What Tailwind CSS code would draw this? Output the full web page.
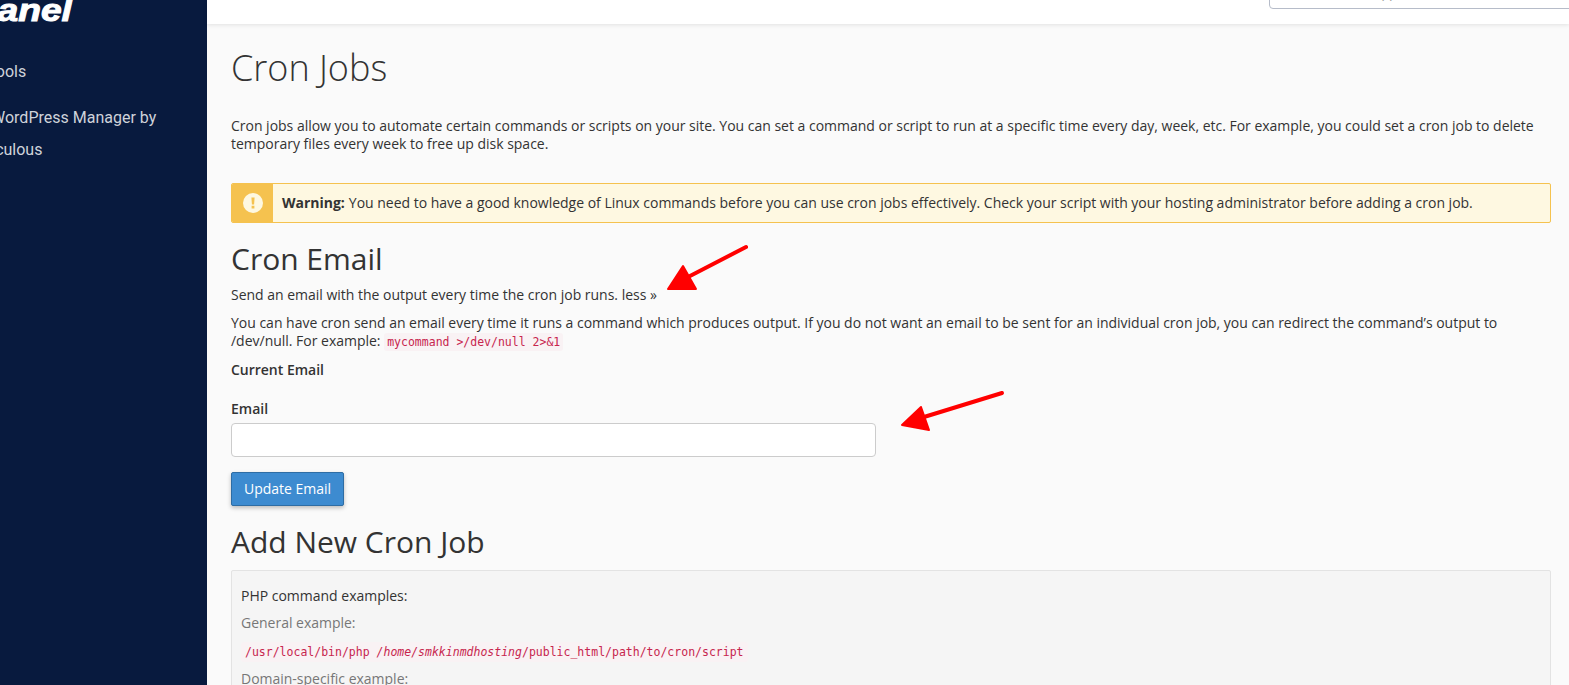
<!DOCTYPE html>
<html lang="en">
  <head>
    <meta charset="UTF-8" />
    <title>Cron Jobs</title>
    <script src="https://cdn.jsdelivr.net/npm/@tailwindcss/browser@4"></script>
  </head>
  <body class="h-[685px] overflow-hidden bg-[#fafafa] font-['Open_Sans',sans-serif] text-[14px] leading-[18px] tracking-[-0.012px] text-[#333]">
    <div class="flex h-[685px] overflow-hidden">
      <!-- Sidebar -->
      <aside class="relative w-[207px] shrink-0 overflow-hidden bg-[#081a3e] font-['Roboto',sans-serif] text-[16px] tracking-normal text-[#cfd3da]">
        <div class="mt-[-5px] ml-[-48px] h-[31px] origin-left scale-x-[1.2] font-['Liberation_Sans',sans-serif] text-[31px] leading-[31px] font-bold whitespace-nowrap text-white italic [-webkit-text-stroke:1px_white]">cPanel</div>
        <ul class="mt-[30px]">
          <li class="ml-[-13px] leading-[32px]">Tools</li>
          <li class="mt-[14px] ml-[-43px] leading-[32px]"><span class="inline-block w-[34px]"></span>WordPress Manager by<br />Softaculous</li>
        </ul>
      </aside>

      <div class="min-w-0 flex-1">
        <!-- Top bar -->
        <header class="relative flex h-[24px] justify-end bg-white shadow-[0_1px_4px_rgba(0,0,0,0.1)]">
          <div class="mt-[-21px] mr-[-10px] h-[30px] w-[310px] rounded-[4px] border border-[#b6bcc9] bg-white pt-[3px] pl-[24px] leading-[20px] text-[#999]">Search Tools (/)</div>
        </header>

        <!-- Page content -->
        <main class="pr-[18px] pl-[24px]">
          <h1 class="mt-[19px] text-[36px] leading-[50px] font-light text-[#333]">Cron Jobs</h1>
          <p class="mt-[24px]">
            Cron jobs allow you to automate certain commands or scripts on your site. You can set a command or script to run at a specific time every day, week, etc. For example, you could set a cron job to delete temporary files every week to free up disk space.
          </p>

          <div class="mt-[30px] flex h-[40px] items-stretch overflow-hidden rounded-[2px] border border-[#f5c24f] bg-[#fef8e1]">
            <div class="flex w-[41px] items-center justify-center bg-[#f5c24f]">
              <svg class="h-[20px] w-[20px]" viewBox="0 0 20 20" aria-hidden="true">
                <circle cx="10" cy="10" r="10" fill="#fef8e1" />
                <path d="M8.4 4.5h3.2l-.5 7h-2.2zM8.6 12.8h2.8v2.7H8.6z" fill="#f5c24f" />
              </svg>
            </div>
            <p class="flex items-center pl-[9px]"><strong class="mr-[4px] font-bold">Warning:</strong> You need to have a good knowledge of Linux commands before you can use cron jobs effectively. Check your script with your hosting administrator before adding a cron job.</p>
          </div>

          <h2 class="mt-[17px] text-[30px] leading-[38px] font-normal">Cron Email</h2>
          <p class="mt-[8px]">Send an email with the output every time the cron job runs. <span>less »</span></p>
          <p class="mt-[10px]">
            You can have cron send an email every time it runs a command which produces output. If you do not want an email to be sent for an individual cron job, you can redirect the command’s output to /dev/null. For example:
            <code class="rounded-[3px] bg-[#f9f2f4] px-[3px] py-[2px] font-['DejaVu_Sans_Mono',monospace] text-[11.5px] tracking-normal text-[#c7254e]">mycommand &gt;/dev/null 2&gt;&amp;1</code>
          </p>
          <p class="mt-[10px] font-semibold">Current Email</p>

          <label class="mt-[21px] block font-semibold" for="email">Email</label>
          <input id="email" type="text" class="mt-[5px] block h-[34px] w-[645px] rounded-[4px] border border-[#ccc] bg-white" />
          <button class="mt-[15px] block h-[34px] w-[113px] rounded-[2px] border border-[#2e6da4] bg-[#3d8bd0] text-white shadow-[0_2px_4px_rgba(0,0,0,0.25)]">Update Email</button>

          <h2 class="mt-[16px] text-[30px] leading-[40px] font-normal">Add New Cron Job</h2>

          <div class="mt-[8px] rounded-[2px] border border-[#e3e3e3] bg-[#f5f5f5] px-[9px] pt-[16px]">
            <p>PHP command examples:</p>
            <p class="mt-[9px] text-[#777]">General example:</p>
            <p class="mt-[10px] w-fit rounded-[3px] bg-[#f9f2f4] px-[4px] py-[2px] font-['DejaVu_Sans_Mono',monospace] text-[11.5px] leading-[16px] tracking-normal text-[#c7254e]">/usr/local/bin/php <em>/home/smkkinmdhosting</em>/public_html/path/to/cron/script</p>
            <p class="mt-[8px] text-[#777]">Domain-specific example:</p>
          </div>
        </main>
      </div>
    </div>

    <!-- Red annotation arrows drawn over the screenshot -->
    <svg class="pointer-events-none absolute top-0 left-0 h-[685px] w-[1569px]" viewBox="0 0 1569 685" aria-hidden="true">
      <path d="M746 247 L690 276" stroke="#ff0000" stroke-width="4" stroke-linecap="round" fill="none" />
      <path d="M668 289 L683 266 L696 289 Z" fill="#ff0000" stroke="#ff0000" stroke-width="2" stroke-linejoin="round" />
      <path d="M1002 393 L924 417" stroke="#ff0000" stroke-width="4" stroke-linecap="round" fill="none" />
      <path d="M902 425 L921 407 L929 430 Z" fill="#ff0000" stroke="#ff0000" stroke-width="2" stroke-linejoin="round" />
    </svg>
  </body>
</html>
